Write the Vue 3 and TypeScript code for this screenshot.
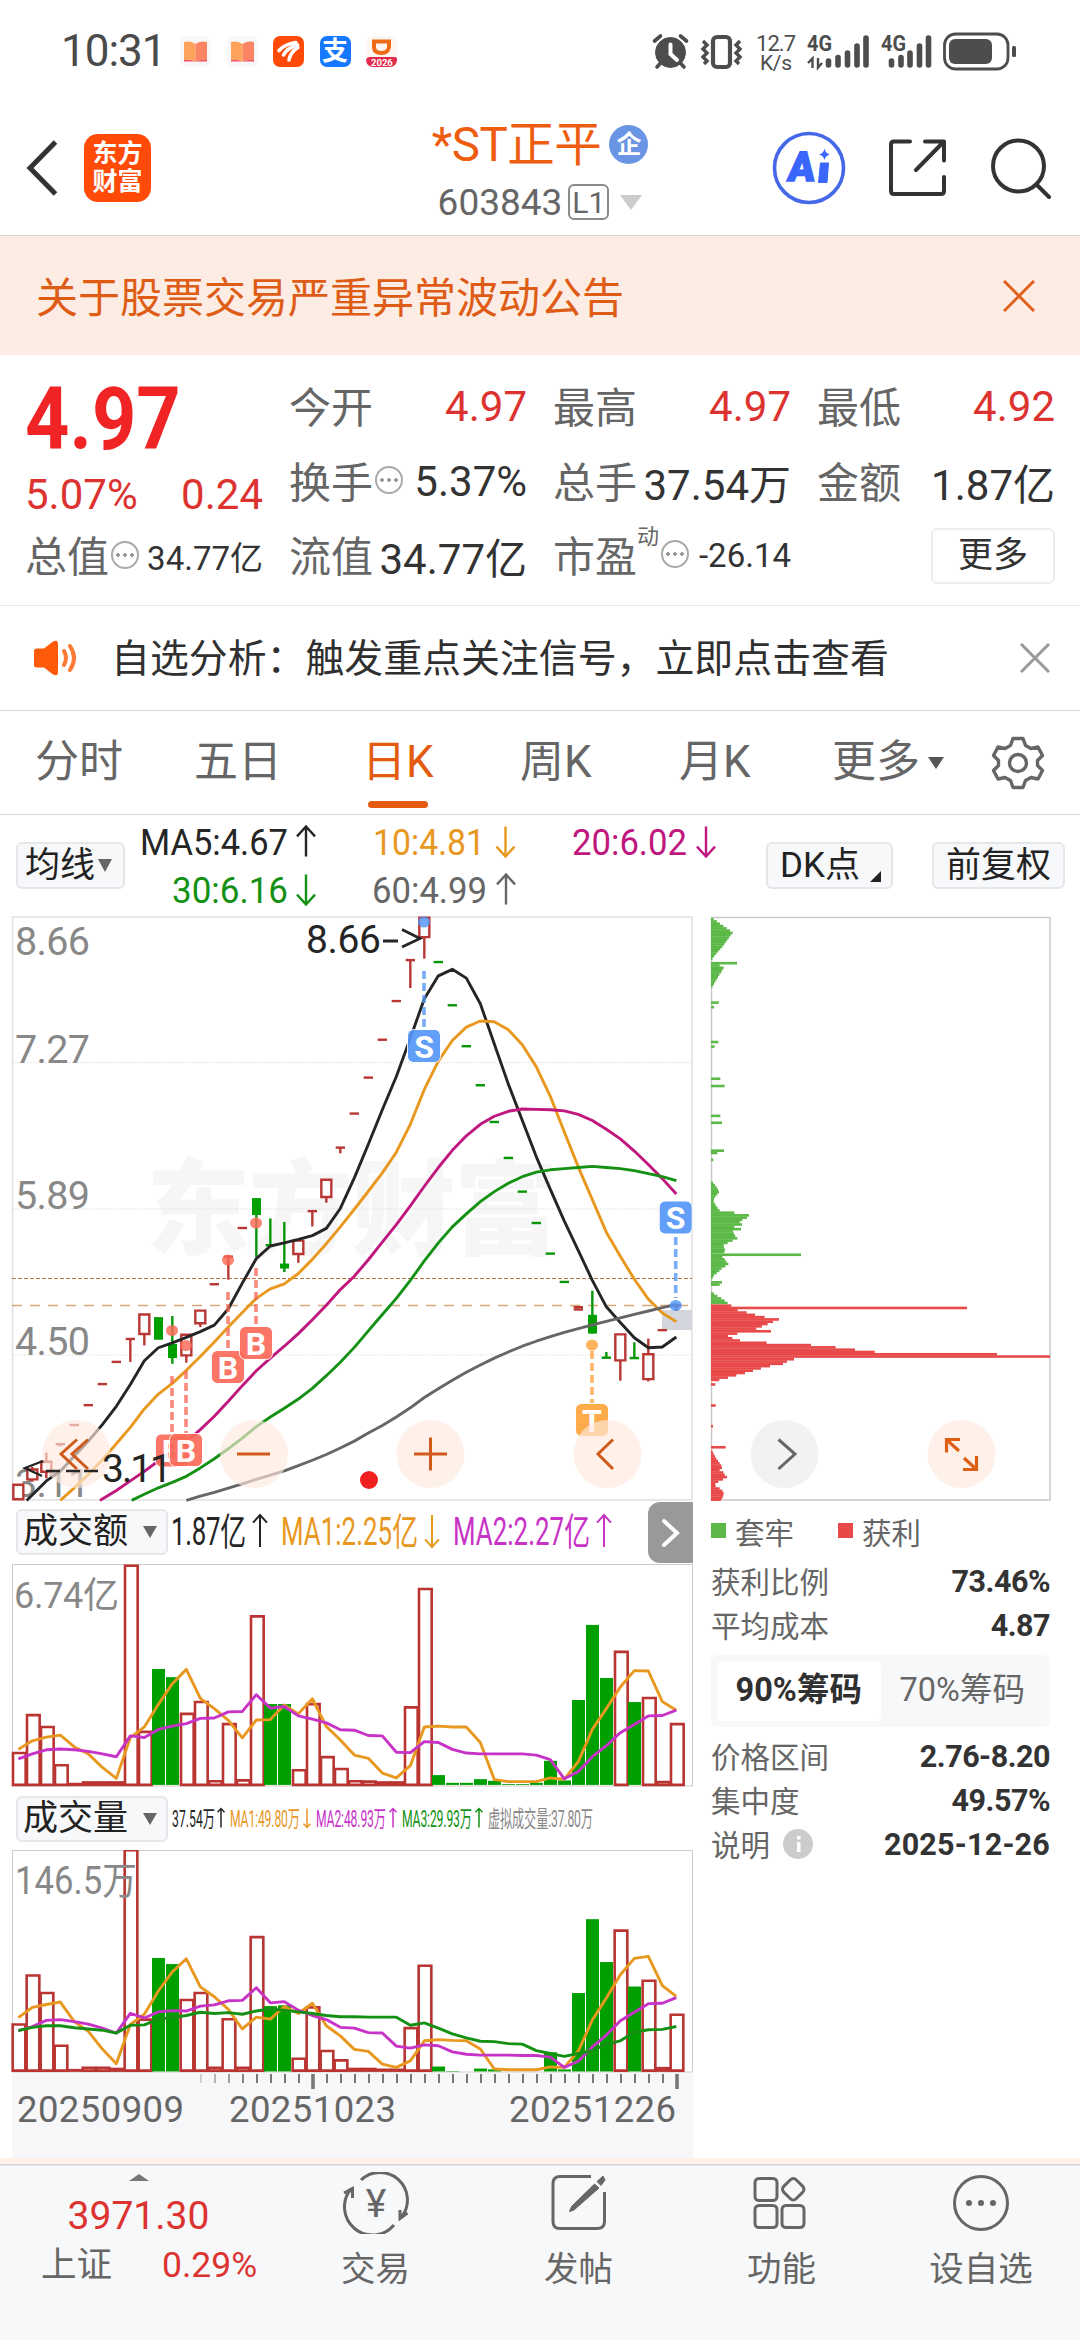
<script setup lang="ts">
type Kind = 'r' | 'g'

/* Plot units: one trading day is 42 wide, first day sits at 55. */
const dayX = (i: number): number => 55 + 42 * i
const line = (ys: number[], from = 0): string =>
  ys.map((y, i) => `${dayX(i + from)},${y}`).join(' ')

interface Candle {
  i: number
  k: Kind
  high?: number
  low?: number
  body?: [number, number]
  dash?: number
}

const candles: Candle[] = [
  { i: 0, k: 'r', body: [1502, 1540] },
  { i: 1, k: 'r', high: 1455, low: 1494, body: [1462, 1488] },
  { i: 2, k: 'r', high: 1418, low: 1485, body: [1442, 1468] },
  { i: 3, k: 'r', high: 1396, low: 1402, dash: 1396 },
  { i: 4, k: 'r', dash: 1346 },
  { i: 5, k: 'r', dash: 1294 },
  { i: 6, k: 'r', dash: 1239 },
  { i: 7, k: 'r', dash: 1181 },
  { i: 8, k: 'r', high: 1121, low: 1181, dash: 1121 },
  { i: 9, k: 'r', high: 1057, low: 1138, body: [1057, 1108] },
  { i: 10, k: 'g', body: [1064, 1123] },
  { i: 11, k: 'g', high: 1061, low: 1186, body: [1134, 1171] },
  { i: 12, k: 'r', high: 1110, low: 1183, body: [1110, 1164] },
  { i: 13, k: 'r', high: 1047, low: 1090, body: [1047, 1080] },
  { i: 14, k: 'r', dash: 978 },
  { i: 15, k: 'r', high: 906, low: 966, dash: 906 },
  { i: 16, k: 'r', dash: 831 },
  { i: 17, k: 'g', high: 753, low: 907, body: [753, 797] },
  { i: 18, k: 'g', high: 806, low: 876, dash: 876 },
  { i: 19, k: 'g', high: 815, low: 946, body: [924, 937] },
  { i: 20, k: 'r', high: 864, low: 922, body: [864, 899] },
  { i: 21, k: 'r', high: 787, low: 827, dash: 787 },
  { i: 22, k: 'r', high: 705, low: 765, body: [705, 750] },
  { i: 23, k: 'r', high: 621, low: 636, dash: 621 },
  { i: 24, k: 'r', dash: 532 },
  { i: 25, k: 'r', dash: 438 },
  { i: 26, k: 'r', dash: 339 },
  { i: 27, k: 'r', dash: 238 },
  { i: 28, k: 'r', high: 131, low: 204, dash: 131 },
  { i: 29, k: 'r', high: 20, low: 127, body: [20, 71] },
  { i: 30, k: 'g', dash: 136 },
  { i: 31, k: 'g', dash: 249 },
  { i: 32, k: 'g', dash: 356 },
  { i: 33, k: 'g', dash: 458 },
  { i: 34, k: 'g', dash: 554 },
  { i: 35, k: 'g', dash: 648 },
  { i: 36, k: 'g', dash: 736 },
  { i: 37, k: 'g', dash: 818 },
  { i: 38, k: 'g', dash: 898 },
  { i: 39, k: 'g', dash: 972 },
  { i: 40, k: 'r', dash: 1038 },
  { i: 40, k: 'r', dash: 1044 },
  { i: 41, k: 'g', high: 995, low: 1107, body: [1058, 1107] },
  { i: 42, k: 'g', high: 1155, low: 1170, dash: 1170 },
  { i: 43, k: 'r', high: 1109, low: 1230, body: [1109, 1177] },
  { i: 44, k: 'g', high: 1130, low: 1171, dash: 1171 },
  { i: 45, k: 'r', high: 1120, low: 1232, body: [1161, 1226] },
  { i: 46, k: 'r', dash: 1098 },
  { i: 47, k: 'r', high: 1033, low: 1047, dash: 1033 },
]

const priceLines = [
  {
    color: '#252525',
    points: '80,1543 ' + line([1492, 1467, 1427, 1388, 1345, 1297, 1240, 1178, 1144, 1131, 1117, 1102, 1085, 1042, 975, 911, 878, 870, 861, 851, 832, 780, 700, 612, 522, 435, 335, 232, 172, 155, 178, 245, 350, 455, 550, 645, 730, 813, 890, 968, 1037, 1078, 1118, 1144, 1142, 1116], 2),
  },
  {
    color: '#e8981f',
    points: line([1543, 1510, 1475, 1437, 1395, 1352, 1304, 1265, 1237, 1203, 1167, 1129, 1090, 1052, 1015, 990, 977, 950, 913, 872, 828, 782, 735, 687, 633, 560, 469, 395, 341, 306, 290, 292, 313, 352, 410, 487, 580, 672, 757, 842, 905, 965, 1017, 1053, 1076], 3),
  },
  {
    color: '#c0177f',
    points: '300,1543 ' + line([1539, 1517, 1492, 1467, 1440, 1415, 1389, 1358, 1323, 1284, 1243, 1204, 1171, 1140, 1107, 1071, 1033, 992, 957, 914, 868, 822, 773, 722, 673, 628, 590, 560, 539, 526, 520, 521, 522, 525, 534, 550, 573, 598, 630, 665, 702, 742], 6),
  },
  {
    color: '#149114',
    points: '395,1543 ' + line([1527, 1510, 1496, 1480, 1458, 1434, 1408, 1380, 1350, 1325, 1302, 1278, 1250, 1217, 1182, 1143, 1100, 1057, 1015, 968, 917, 870, 828, 794, 762, 736, 714, 697, 685, 679, 676, 673, 670, 673, 676, 681, 689, 697, 707], 9),
  },
  {
    color: '#666',
    points: line([1543, 1532, 1522, 1511, 1500, 1488, 1477, 1466, 1452, 1438, 1423, 1406, 1388, 1367, 1347, 1325, 1301, 1274, 1251, 1229, 1208, 1189, 1171, 1155, 1140, 1127, 1115, 1104, 1094, 1084, 1075, 1066, 1057, 1048, 1039, 1031], 12),
  },
]

interface Mark {
  x: number
  y: number
  t: string
  color: string
  dot: number
  from: number
  to: number
}
/* Trading marks in chart pixels. */
const marks: Mark[] = [
  { x: 172, y: 540.5, t: 'B', color: '#fb6b5a', dot: 420.5, from: 466, to: 523 },
  { x: 186, y: 540, t: 'B', color: '#fb6b5a', dot: 435.5, from: 461, to: 523 },
  { x: 228, y: 457, t: 'B', color: '#fb6b5a', dot: 350, from: 382, to: 440 },
  { x: 256, y: 433, t: 'B', color: '#fb6b5a', dot: 313, from: 358, to: 416 },
  { x: 424, y: 136, t: 'S', color: '#5597f8', dot: 12, from: 61, to: 118 },
  { x: 675.7, y: 307.5, t: 'S', color: '#5597f8', dot: 395.5, from: 327, to: 388 },
  { x: 592, y: 510, t: 'T', color: '#fda43c', dot: 435, from: 441, to: 493 },
]

const priceLabels = [
  { t: '8.66', y: 45 },
  { t: '7.27', y: 153 },
  { t: '5.89', y: 299 },
  { t: '4.50', y: 445 },
  { t: '3.11', y: 587 },
]

const gIdx = [10, 11, 18, 19, 30, 31, 32, 33, 34, 35, 36, 37, 38, 39, 40, 41, 42, 44]
interface Bar {
  x: number
  y: number
  green: boolean
}
const bars = (tops: number[]): Bar[] =>
  tops.map((y, i) => ({ x: dayX(i), y, green: gIdx.includes(i) }))

const amountBars = bars([618, 525, 554, 648, 694, 690, 690, 690, 159, 566, 414, 434, 522, 493, 687, 547, 685, 283, 500, 500, 660, 498, 628, 657, 687, 688, 690, 690, 506, 216, 674, 693, 693, 684, 688, 696, 696, 693, 639, 687, 490, 306, 436, 370, 495, 483, 689, 547])
const volumeBars = bars([1285, 1165, 1208, 1337, 1397, 1391, 1391, 1394, 858, 1273, 1122, 1137, 1225, 1208, 1391, 1272, 1391, 1071, 1240, 1238, 1369, 1243, 1350, 1373, 1394, 1394, 1396, 1396, 1294, 1141, 1388, 1399, 1400, 1393, 1395, 1400, 1400, 1400, 1353, 1395, 1208, 1027, 1132, 1055, 1192, 1178, 1392, 1261])

const amountLines = [
  { color: '#e8981f', points: line([611, 590, 581, 576, 605, 622, 655, 682, 582, 556, 501, 450, 415, 486, 511, 540, 583, 539, 538, 502, 524, 487, 555, 588, 625, 633, 669, 681, 651, 556, 554, 556, 556, 594, 685, 690, 690, 690, 681, 684, 641, 562, 511, 458, 418, 419, 494, 515]) },
  { color: '#c733c7', points: line([634, 622, 612, 610, 612, 616, 622, 629, 578, 582, 562, 554, 548, 535, 534, 519, 518, 477, 510, 506, 529, 537, 546, 563, 564, 577, 578, 618, 619, 592, 594, 611, 620, 622, 622, 622, 622, 625, 636, 683, 665, 629, 602, 570, 550, 529, 528, 515]) },
]
const volumeLines = [
  { color: '#e8981f', points: line([1268, 1243, 1236, 1230, 1278, 1302, 1345, 1381, 1285, 1260, 1203, 1156, 1124, 1193, 1217, 1248, 1296, 1267, 1272, 1241, 1258, 1233, 1288, 1313, 1346, 1351, 1382, 1390, 1374, 1325, 1322, 1324, 1325, 1345, 1394, 1396, 1396, 1396, 1389, 1390, 1350, 1274, 1220, 1163, 1123, 1118, 1190, 1216]) },
  { color: '#c733c7', points: line([1300, 1290, 1275, 1273, 1278, 1284, 1294, 1306, 1258, 1269, 1254, 1251, 1252, 1240, 1237, 1227, 1226, 1195, 1232, 1229, 1250, 1263, 1273, 1292, 1294, 1305, 1306, 1338, 1343, 1335, 1337, 1352, 1358, 1360, 1360, 1360, 1361, 1361, 1365, 1390, 1375, 1340, 1311, 1276, 1255, 1234, 1233, 1219]) },
  { color: '#149114', points: line([1300, 1292, 1288, 1288, 1293, 1296, 1299, 1306, 1287, 1286, 1272, 1268, 1263, 1255, 1258, 1256, 1260, 1252, 1247, 1250, 1254, 1258, 1263, 1266, 1266, 1267, 1267, 1267, 1287, 1281, 1294, 1308, 1318, 1326, 1327, 1332, 1333, 1349, 1356, 1363, 1356, 1349, 1333, 1325, 1304, 1298, 1297, 1290]) },
]

const ticks = Array.from({ length: 35 }, (_, n) => ({
  x: 201 + 14 * n,
  big: n === 8 || n === 34,
  o: Math.min(1, 0.3 + n * 0.2),
}))

/* Chip distribution, rows of [y, width] 6 units apart. */
const greenRows: [number, number][] = [
  [24, 8], [30, 18], [36, 27], [42, 37], [48, 47], [54, 57], [60, 65], [66, 59], [72, 54], [78, 49], [84, 44], [90, 39], [96, 34], [102, 28], [108, 22], [114, 16], [120, 10], [126, 5],
  [139, 78], [145, 26], [151, 38], [157, 34], [163, 30], [169, 25], [175, 21], [181, 17], [187, 13], [193, 9], [199, 5],
  [242, 23], [254, 9], [345, 22], [357, 11], [441, 28], [460, 41], [538, 28], [556, 33], [629, 39], [635, 19], [653, 7],
  [713, 6], [719, 12], [725, 17], [731, 21], [737, 24], [743, 19], [749, 13], [755, 9], [761, 8], [767, 11], [773, 15], [779, 20], [785, 26], [791, 70], [798, 114], [804, 108], [810, 94], [816, 86], [822, 93], [828, 70], [834, 90], [840, 66], [846, 69], [852, 73], [858, 79], [864, 65], [870, 50], [876, 38], [882, 39], [888, 42], [894, 40], [901, 270], [907, 34], [913, 41], [919, 46], [925, 52], [931, 43], [937, 32], [943, 25], [949, 17], [955, 9], [961, 5],
  [973, 33], [979, 26], [1003, 9], [1009, 19], [1015, 31], [1021, 41], [1027, 50],
]
const redRows: [number, number][] = [
  [1034, 61], [1040, 768], [1046, 80], [1052, 107], [1058, 132], [1064, 161], [1070, 204], [1076, 186], [1082, 170], [1088, 153], [1094, 136], [1101, 180], [1107, 79], [1113, 51], [1119, 64], [1125, 87], [1131, 167], [1137, 300], [1143, 374], [1149, 432], [1155, 491], [1161, 858], [1167, 1017], [1174, 249], [1180, 228], [1186, 216], [1192, 177], [1198, 150], [1204, 126], [1210, 102], [1216, 76], [1222, 51], [1228, 25],
  [1240, 13], [1295, 14], [1349, 6], [1404, 44],
  [1416, 5], [1422, 8], [1428, 12], [1434, 16], [1440, 21], [1446, 26], [1452, 31], [1458, 33], [1464, 26], [1470, 37], [1476, 41], [1482, 48], [1488, 36], [1494, 22], [1500, 13], [1506, 14], [1512, 26], [1518, 34], [1524, 38], [1530, 37], [1536, 34], [1541, 30],
]

interface Legend {
  t: string
  x: number
  w: number
  c: string
  up?: boolean
  ax?: number
}
const maTop: (Legend & { y: number })[] = [
  { t: 'MA5:4.67', x: 140, w: 148, c: '#252525', up: true, ax: 306, y: 37.5 },
  { t: '10:4.81', x: 373, w: 112, c: '#e8981f', up: false, ax: 505.5, y: 37.5 },
  { t: '20:6.02', x: 572, w: 115, c: '#c0177f', up: false, ax: 706, y: 37.5 },
  { t: '30:6.16', x: 172, w: 116, c: '#149114', up: false, ax: 306, y: 85.5 },
  { t: '60:4.99', x: 372, w: 115, c: '#666', up: true, ax: 506, y: 85.5 },
]
/* Condensing factors of the two indicator rows. */
const amountSqueeze = 0.68
const volumeSqueeze = 0.53
const amountLegend: Legend[] = [
  { t: '1.87亿', x: 171, w: 75, c: '#252525', up: true, ax: 260 },
  { t: 'MA1:2.25亿', x: 281, w: 137, c: '#e8981f', up: false, ax: 432 },
  { t: 'MA2:2.27亿', x: 453, w: 137, c: '#c733c7', up: true, ax: 604 },
]
const volumeLegend: Legend[] = [
  { t: '37.54万', x: 172, w: 43, c: '#252525', up: true, ax: 221 },
  { t: 'MA1:49.80万', x: 230, w: 70, c: '#e8981f', up: false, ax: 307 },
  { t: 'MA2:48.93万', x: 316, w: 70, c: '#c733c7', up: true, ax: 393 },
  { t: 'MA3:29.93万', x: 402, w: 70, c: '#149114', up: true, ax: 479 },
  { t: '虚拟成交量:37.80万', x: 488, w: 105, c: '#888' },
]
const arrow = (x: number, y: number, up: boolean, h: number, w: number): string =>
  up
    ? `M${x} ${y + h}V${y - h}M${x - w} ${y - h + w * 1.1}L${x} ${y - h}L${x + w} ${y - h + w * 1.1}`
    : `M${x} ${y - h}V${y + h}M${x - w} ${y + h - w * 1.1}L${x} ${y + h}L${x + w} ${y + h - w * 1.1}`
</script>

<template>
  <div class="app">
    <div class="status">
      <span class="clock">10:31</span>
      <span v-for="n in 2" :key="n" class="pill book"><svg width="31" height="31" viewBox="0 0 31 31"><path d="M4 6q6-1.500 11.500 2v17.500q-5-2.500-11.500-1.500z" fill="#fda35c" /><path d="M27 6q-6-1.500-11.500 2v17.500q5-2.500 11.500-1.500z" fill="#fb8562" /><path d="M4 24q6-1 11.500 1.500q5-2.500 11.500-1.500v1.500H4z" fill="#f4506a" /></svg></span>
      <span class="pill em"><svg width="31" height="31" viewBox="0 0 31 31"><g fill="none" stroke="#fff" stroke-width="3.600" stroke-linecap="round"><path d="M6 14.500Q11 8.500 23 6.500" /><path d="M10.500 19Q14 12 24.500 9" /><path d="M16 24Q17.500 16 25 11.500" /></g></svg></span>
      <span class="pill ali">支</span>
      <span class="pill didi"><svg width="32" height="31" viewBox="0 0 32 31"><path d="M8 5.500H23V11Q22 17 15.500 17Q8 17 8 11Z" fill="none" stroke="#ee6a16" stroke-width="4" /><rect x="0" y="21" width="32" height="10" rx="4" fill="#e32b4c" /><text x="5" y="29.500" font-size="9.500" font-weight="700" fill="#fff">2026</text></svg></span>
      <span class="grow"></span>
      <svg class="sysicons" width="378" height="50" viewBox="645 25 378 50">
        <g fill="#4d4d4d" stroke="#4d4d4d">
          <circle cx="669.500" cy="51.500" r="15" />
          <path d="M653.500 40l6-5M685.500 40l-6-5M656 66l4-4.500M683 66l-4-4.500" stroke-width="3.600" fill="none" stroke-linecap="round" />
          <path d="M669.500 43.500V53L676 59" stroke="#fff" stroke-width="4" fill="none" stroke-linecap="round" />
          <rect x="712" y="36" width="17" height="30" rx="4" fill="none" stroke-width="4.200" />
          <path d="M702 40l4 4-4 4 4 4-4 4 4 4-3 3M739 40l-4 4 4 4-4 4 4 4-4 4 3 3" stroke-width="3.400" fill="none" />
          <g stroke-width="5.600" stroke-linecap="round">
            <path d="M827.500 60v4M837 56.500V64M846.500 52V64M856 45V64M865 37V64" />
            <path d="M890.500 60v4M900 56.500V64M909 52V64M918.500 45V64M927.500 37V64" />
          </g>
          <path d="M811.500 67V57.500L807 62M817 57v9.500L821 62" stroke-width="2.400" fill="none" />
          <rect x="943.500" y="33" width="63.500" height="35" rx="11" fill="none" stroke-width="2.800" />
          <rect x="948" y="38" width="43" height="25" rx="6" stroke="none" />
          <rect x="1011" y="45" width="4" height="11" rx="1.500" stroke="none" />
        </g>
        <g fill="#4d4d4d">
          <text x="755" y="50" font-size="22" textLength="40">12.7</text>
          <text x="759" y="68.500" font-size="21" textLength="32">K/s</text>
          <text x="806" y="50" font-size="22" font-weight="700" textLength="25" lengthAdjust="spacingAndGlyphs">4G</text>
          <text x="880" y="50" font-size="22" font-weight="700" textLength="25" lengthAdjust="spacingAndGlyphs">4G</text>
        </g>
      </svg>
    </div>

    <header class="nav">
      <div class="nav-left">
        <svg width="36" height="60" viewBox="0 0 36 60"><path d="M31.500 4L6 30L31.500 56" fill="none" stroke="#333" stroke-width="5" /></svg>
        <div class="logo"><span>东方</span><span>财富</span></div>
      </div>
      <div class="nav-mid">
        <div class="title"><span>*ST正平</span><i class="corp">企</i></div>
        <div class="code"><span>603843</span><i class="lv">L1</i><b class="tri"></b></div>
      </div>
      <div class="nav-right">
        <svg width="74" height="74" viewBox="0 0 74 74"><circle cx="37" cy="37" r="34.500" fill="none" stroke="#4468e8" stroke-width="3.600" /><text x="15" y="50" font-size="41" font-weight="900" fill="#3a66fb" stroke="#3a66fb" stroke-width="1.500" textLength="27" lengthAdjust="spacingAndGlyphs" transform="skewX(-6) translate(5 0)">A</text><path d="M48.500 32h8l-1.500 19.500h-8.500z" fill="#3a66fb" stroke="#3a66fb" stroke-linejoin="round" /><path d="M52.500 17.500Q53.500 22.500 58 23.500Q53.500 24.500 52.500 29Q51.500 24.500 47 23.500Q51.500 22.500 52.500 17.500Z" fill="#3a66fb" /></svg>
        <svg width="60" height="60" viewBox="0 0 60 60"><g fill="none" stroke="#333" stroke-width="4" stroke-linecap="round" stroke-linejoin="round"><path d="M22 3.500H6Q3 3.500 3 6.500V53Q3 56 6 56H53Q56 56 56 53V39" /><path d="M37 3.500H56V22.500M55 4.500L28 32" /></g></svg>
        <svg width="62" height="62" viewBox="0 0 62 62"><g fill="none" stroke="#333" stroke-width="4" stroke-linecap="round"><circle cx="28.500" cy="29" r="25.500" /><path d="M47 48L59 60" /></g></svg>
      </div>
    </header>

    <div class="banner">
      <span>关于股票交易严重异常波动公告</span>
      <svg width="32" height="32" viewBox="0 0 32 32"><path d="M1 1L31 31M31 1L1 31" stroke="#e0601c" stroke-width="3" /></svg>
    </div>

    <section class="quote">
      <div class="q-main">
        <div class="big"><span>4.97</span></div>
        <div class="chg red"><span>5.07%</span><span>0.24</span></div>
        <div class="cap"><label>总值</label><i class="dots"></i><span class="sm">34.77亿</span></div>
      </div>
      <div class="q-col">
        <div><label>今开</label><span class="red">4.97</span></div>
        <div><label>换手</label><i class="dots"></i><span>5.37%</span></div>
        <div class="r3"><label>流值</label><span>34.77亿</span></div>
      </div>
      <div class="q-col">
        <div><label>最高</label><span class="red">4.97</span></div>
        <div><label>总手</label><span>37.54万</span></div>
        <div class="r3"><label>市盈</label><sup>动</sup><i class="dots"></i><span class="sm">-26.14</span></div>
      </div>
      <div class="q-col">
        <div><label>最低</label><span class="red">4.92</span></div>
        <div><label>金额</label><span>1.87亿</span></div>
        <div class="end"><button class="more">更多</button></div>
      </div>
    </section>

    <div class="notice">
      <svg width="46" height="38" viewBox="0 0 46 38"><path d="M1 12Q1 9.500 4 9.500H11L20 2.500Q25 0 25 5V33Q25 38 20 35.500L11 28.500H4Q1 28.500 1 26Z" fill="#ff5a0a" /><path d="M31 12Q35 19 31 26M37 7Q45 19 37 31" fill="none" stroke="#ff7a36" stroke-width="4" stroke-linecap="round" /></svg>
      <span>自选分析：触发重点关注信号，立即点击查看</span>
      <svg width="30" height="30" viewBox="0 0 30 30"><path d="M1 1L29 29M29 1L1 29" stroke="#999" stroke-width="3" /></svg>
    </div>

    <nav class="tabs">
      <span class="w1">分时</span><span class="w2">五日</span><span class="w3 on">日K</span><span class="w4">周K</span><span class="w5">月K</span>
      <span class="tmore">更多<b></b></span>
      <svg width="54" height="54" viewBox="-27 -27 54 54"><path d="M-5 -24.500H5L7.500 -17.500L13 -14.500L20 -16L24.500 -7.500L19.500 -2.500V2.500L24.500 7.500L20 16L13 14.500L7.500 17.500L5 24.500H-5L-7.500 17.500L-13 14.500L-20 16L-24.500 7.500L-19.500 2.500V-2.500L-24.500 -7.500L-20 -16L-13 -14.500L-7.500 -17.500Z" fill="none" stroke="#666" stroke-width="3.400" stroke-linejoin="round" /><circle r="8.500" fill="none" stroke="#666" stroke-width="3.400" /></svg>
    </nav>

    <div class="ma-row">
      <button class="chip ma">均线<b></b></button>
      <svg class="ma-legend" width="640" height="100" viewBox="125 -2 640 100">
        <g v-for="m in maTop" :key="m.t">
          <text :x="m.x" :y="m.y" :fill="m.c" font-size="36.500" :textLength="m.w" lengthAdjust="spacingAndGlyphs">{{ m.t }}</text>
          <path :d="arrow(m.ax ?? 0, m.y - 13, m.up ?? false, 15, 9)" :stroke="m.c" fill="none" stroke-width="2.400" />
        </g>
      </svg>
      <button class="chip dk">DK点<b></b></button>
      <button class="chip fq">前复权</button>
    </div>

    <div class="charts">
      <div class="left">
        <svg class="blk" width="700" height="592" viewBox="0 0 700 592">
          <g class="wm"><text x="146" y="337" font-size="104" font-weight="900" textLength="412">东方财富</text></g>
          <rect x="12.500" y="7" width="679.500" height="583" fill="none" stroke="#e2e2e2" stroke-width="1.600" />
          <path d="M12 152.700H692M12 299H692M12 445H692" stroke="#ddd" stroke-dasharray="1.500 1.500" fill="none" />
          <path d="M12 368.500H692" stroke="#c0703c" stroke-width="1.200" stroke-dasharray="4 2" />
          <path d="M12 395.500H692" stroke="#d9a877" stroke-width="1.400" stroke-dasharray="10 8" />
          <rect x="662" y="400" width="30" height="20" fill="#d3d6dc" />
          <text v-for="p in priceLabels" :key="p.t" x="15" :y="p.y" font-size="39.500" fill="#888" textLength="75">{{ p.t }}</text>
          <g transform="scale(0.33333 0.38265)" class="plot">
            <template v-for="(c, n) in candles" :key="n">
              <path v-if="c.high !== undefined" :d="`M${dayX(c.i)} ${c.high}V${c.low}`" :class="c.k" />
              <rect v-if="c.body" :x="dayX(c.i) - (c.k === 'r' ? 15 : 13)" :y="c.body[0]" :width="c.k === 'r' ? 30 : 27" :height="c.body[1] - c.body[0]" :class="[c.k, 'box']" />
              <path v-if="c.dash !== undefined" :d="`M${dayX(c.i) - 14} ${c.dash}h28`" :class="c.k" />
            </template>
            <polyline v-for="l in priceLines" :key="l.color" :points="l.points" :stroke="l.color" class="ln" />
          </g>
          <text x="306" y="43" font-size="39" fill="#252525" textLength="75">8.66</text>
          <path d="M383 31H398M402 19.500L420 28.500L402 37" class="ptr" />
          <g v-for="(m, n) in marks" :key="n" opacity="0.920">
            <path :d="`M${m.x} ${m.from}V${m.to}`" :stroke="m.color" stroke-width="3.600" stroke-dasharray="8 4" opacity="0.850" />
            <ellipse :cx="m.x" :cy="m.dot" rx="6" ry="5.500" :fill="m.color" opacity="0.900" />
            <rect :x="m.x - 16.5" :y="m.y - 16.5" width="33" height="33" rx="6" :fill="m.color" stroke="#fff" stroke-width="1" />
            <text :x="m.x" :y="m.y + 11.5" text-anchor="middle" font-size="32" font-weight="700" fill="#fff">{{ m.t }}</text>
          </g>
          <g fill="#ffe9df" fill-opacity="0.650">
            <circle cx="76.500" cy="544" r="34" /><circle cx="254" cy="544" r="34" /><circle cx="430.500" cy="544" r="34" /><circle cx="607.500" cy="544" r="34" />
          </g>
          <path d="M43 551L25 558L42 566M46 561H60M66 561H80M84 561H98" class="ptr thin" />
          <text x="102" y="572" font-size="39" fill="#252525" textLength="70">3.11</text>
          <g stroke="#cf5a1a" stroke-width="3" fill="none">
            <path d="M77 529.500L61 544L77 559M88 529.500L72 544L88 559M237 544h33M414 544h33M430.500 527.500v33M613 529.500L598 544L613 559" />
          </g>
          <circle cx="369" cy="570" r="9" fill="#f02020" />
        </svg>

        <div class="sub">
          <button class="chip vol">成交额<b></b></button>
          <svg width="470" height="62" viewBox="168 0 470 62">
            <g v-for="m in amountLegend" :key="m.t">
              <text :transform="`translate(${m.x} 43) scale(${amountSqueeze} 1)`" :fill="m.c" font-size="38" :textLength="m.w / amountSqueeze">{{ m.t }}</text>
              <path :d="arrow(m.ax ?? 0, 29, m.up ?? false, 16, 7)" :stroke="m.c" fill="none" stroke-width="2" />
            </g>
          </svg>
          <span class="nextbtn"><svg width="20" height="30" viewBox="0 0 20 30"><path d="M3 3L16 15L3 27" fill="none" stroke="#fff" stroke-width="4" stroke-linecap="round" /></svg></span>
        </div>

        <svg class="blk" width="700" height="223" viewBox="0 64 700 223">
          <rect x="12.500" y="64.500" width="680" height="221.500" fill="none" stroke="#ccc" />
          <g transform="scale(0.33333 0.40816)" class="plot">
            <template v-for="b in amountBars" :key="b.x">
              <rect v-if="b.green" :x="b.x - 19" :y="b.y" width="39" :height="698 - b.y" class="g fill" />
              <rect v-else :x="b.x - 16" :y="b.y + 2" width="38" :height="Math.max(1, 696 - b.y)" class="r box bar" />
            </template>
            <polyline v-for="l in amountLines" :key="l.color" :points="l.points" :stroke="l.color" class="ln" />
          </g>
          <text x="14" y="108" font-size="36" fill="#888" textLength="105">6.74亿</text>
        </svg>

        <div class="sub sub2">
          <button class="chip vol">成交量<b></b></button>
          <svg width="470" height="62" viewBox="168 0 470 62">
            <g v-for="m in volumeLegend" :key="m.t">
              <text :transform="`translate(${m.x} 40) scale(${volumeSqueeze} 1)`" :fill="m.c" font-size="23" :textLength="m.w / volumeSqueeze">{{ m.t }}</text>
              <path v-if="m.ax" :d="arrow(m.ax, 31, m.up ?? false, 9.5, 3.5)" :stroke="m.c" fill="none" stroke-width="1.500" />
            </g>
          </svg>
        </div>

        <svg class="blk" width="700" height="308" viewBox="0 350 700 308">
          <rect x="12" y="573" width="681" height="90" fill="#f7f7fa" />
          <rect x="12.500" y="350.500" width="680" height="221.500" fill="none" stroke="#ccc" />
          <g transform="scale(0.33333 0.40816)" class="plot">
            <template v-for="b in volumeBars" :key="b.x">
              <rect v-if="b.green" :x="b.x - 19" :y="b.y" width="39" :height="1400 - b.y" class="g fill" />
              <rect v-else :x="b.x - 17" :y="b.y" width="38" :height="Math.max(1, 1398 - b.y)" class="r box bar" />
            </template>
            <polyline v-for="l in volumeLines" :key="l.color" :points="l.points" :stroke="l.color" class="ln" />
          </g>
          <text x="15" y="393.500" font-size="38" fill="#888" textLength="122" lengthAdjust="spacingAndGlyphs">146.5万</text>
          <path v-for="t in ticks" :key="t.x" :d="`M${t.x} 574v${t.big ? 15 : 9}`" stroke="#777" :stroke-width="t.big ? 3.6 : 2" :opacity="t.o" />
          <g font-size="36.500" fill="#666">
            <text x="17" y="622" textLength="167">20250909</text>
            <text x="229" y="622" textLength="167">20251023</text>
            <text x="509" y="622" textLength="167">20251226</text>
          </g>
        </svg>
      </div>

      <aside class="right">
        <svg class="blk" width="380" height="592" viewBox="0 0 380 592">
          <rect x="11.500" y="7.500" width="338.500" height="582.500" fill="none" stroke="#c9c9c9" stroke-width="1.500" />
          <g transform="scale(0.33333 0.38265)">
            <rect v-for="r in greenRows" :key="r[0]" x="33" :y="r[0] - 3.4" :width="r[1]" height="6.800" fill="#5cb947" />
            <rect v-for="r in redRows" :key="r[0]" x="33" :y="r[0] - 3.4" :width="r[1]" height="6.800" fill="#e84a4a" />
          </g>
          <circle cx="84.500" cy="544" r="34" fill="#f2f2f2" />
          <path d="M78.500 529.500L95 544L78.500 559" fill="none" stroke="#666" stroke-width="3" />
          <circle cx="261.500" cy="544" r="34" fill="#fff1e9" />
          <g fill="none" stroke="#dd5f14" stroke-width="3.200"><path d="M260 529.500H246.500V542.500M247 530L259 541M263 559.500H276.500V546M276 559L264 548" /></g>
        </svg>
        <div class="key"><b class="sq gr"></b><span>套牢</span><b class="sq rd"></b><span>获利</span></div>
        <div class="info"><label>获利比例</label><strong>73.46%</strong></div>
        <div class="info"><label>平均成本</label><strong>4.87</strong></div>
        <div class="seg"><span class="sel">90%筹码</span><span>70%筹码</span></div>
        <div class="info"><label>价格区间</label><strong>2.76-8.20</strong></div>
        <div class="info"><label>集中度</label><strong>49.57%</strong></div>
        <div class="info"><label>说明</label><i class="inf"></i><strong class="date">2025-12-26</strong></div>
      </aside>
    </div>

    <footer class="bar-bottom">
      <div class="index">
        <b class="up"></b>
        <div class="idx red">3971.30</div>
        <div class="idx2"><span>上证</span><span class="red">0.29%</span></div>
      </div>
      <div class="act">
        <svg width="66" height="62" viewBox="-33 -31 66 62"><g fill="none" stroke="#666" stroke-width="3"><path d="M-15 -23A27.500 27.500 0 0 1 25.500 14M18 22A27.500 27.500 0 0 1 -25 -14" /><path d="M-32 -10L-23.500 -14.500V-5M31.500 10L24 15.500V7" /></g><text x="0" y="14" text-anchor="middle" font-size="39" fill="#666">¥</text></svg>
        <span>交易</span>
      </div>
      <div class="act">
        <svg width="62" height="62" viewBox="-31 -31 62 62"><path d="M12 -26.500H-19Q-26 -26.500 -26 -19.500V18.500Q-26 25.500 -19 25.500H18Q25.500 25.500 25.500 18.500V-11" fill="none" stroke="#666" stroke-width="3" /><path d="M15.500 -19L20 -15L-5 7L-9.500 8.500L-7.500 3.500ZM18 -21.500L24 -27L26 -23L22 -17.500Z" fill="#666" stroke="#666" /></svg>
        <span>发帖</span>
      </div>
      <div class="act">
        <svg width="62" height="62" viewBox="-31 -31 62 62"><g fill="none" stroke="#666" stroke-width="3"><rect x="-27" y="-24.500" width="22" height="22" rx="4" /><rect x="-27" y="2.500" width="22" height="22" rx="4" /><rect x="0" y="2.500" width="22" height="22" rx="4" /><rect x="2.500" y="-22.500" width="17.500" height="17.500" rx="4" transform="rotate(45 11.250 -13.750)" /></g></svg>
        <span>功能</span>
      </div>
      <div class="act last">
        <svg width="62" height="62" viewBox="-31 -31 62 62"><circle r="26.500" fill="none" stroke="#666" stroke-width="3" /><g fill="#666"><circle cx="-12" r="3" /><circle r="3" /><circle cx="12" r="3" /></g></svg>
        <span>设自选</span>
      </div>
    </footer>
  </div>
</template>

<style>
body {
  margin: 0;
  background: #fff;
}
</style>

<style scoped>
.app {
  width: 1080px;
  height: 2340px;
  overflow: hidden;
  display: flex;
  flex-direction: column;
  background: #fff;
  color: #333;
  font-family: Roboto, 'Noto Sans CJK SC', sans-serif;
}
.app > * {
  flex-shrink: 0;
}
i {
  font-style: normal;
}
button {
  font: inherit;
  color: inherit;
  padding: 0;
  margin: 0;
}
.blk {
  display: block;
}
.red {
  color: #dc3330 !important;
}
.grow {
  flex: 1;
}

/* status bar */
.status {
  height: 100px;
  display: flex;
  align-items: center;
  padding: 2px 56px 0 61px;
  box-sizing: border-box;
}
.clock {
  font-size: 44px;
  width: 119px;
  color: #4a4a4a;
  letter-spacing: -1px;
}
.pill {
  width: 31px;
  height: 31px;
  margin-right: 15.500px;
  border-radius: 7px;
  overflow: hidden;
  display: block;
  font-size: 26px;
  line-height: 31px;
}
.pill svg {
  display: block;
}
.book {
  background: #f8f6f6;
}
.em {
  background: #ff4a08;
}
.ali {
  background: #1678fe;
  color: #fff;
  text-align: center;
  font-weight: 700;
}
.didi {
  background: #fdf6f2;
}

/* navigation */
.nav {
  height: 136px;
  border-bottom: 1px solid #d5d5d5;
  box-sizing: border-box;
  display: grid;
  grid-template-columns: 1fr auto 1fr;
}
.nav-left {
  display: flex;
  align-items: center;
  padding-left: 24px;
  gap: 24px;
}
.logo {
  width: 67px;
  height: 68px;
  border-radius: 14px;
  background: #ff4a08;
  color: #fff;
  font-size: 25px;
  font-weight: 700;
  line-height: 28px;
  display: flex;
  flex-direction: column;
  align-items: center;
  justify-content: center;
}
.nav-mid {
  display: flex;
  flex-direction: column;
  align-items: center;
  padding-top: 16px;
}
.title {
  display: flex;
  align-items: center;
  height: 56px;
  font-size: 47.500px;
  color: #ee5c10;
  gap: 8px;
  letter-spacing: -0.500px;
}
.title span {
  padding-bottom: 7px;
}
.corp {
  width: 39px;
  height: 39px;
  border-radius: 50%;
  background: #6a94e4;
  color: #fff;
  font-size: 25px;
  font-weight: 700;
  line-height: 39px;
  text-align: center;
}
.code {
  display: flex;
  align-items: center;
  height: 60px;
  font-size: 37px;
  color: #666;
}
.code .lv {
  border: 2px solid #8a8a8a;
  border-radius: 6px;
  width: 37px;
  height: 32px;
  line-height: 33px;
  font-size: 30px;
  text-align: center;
  margin-left: 6px;
}
.tri {
  border: 11px solid transparent;
  border-top: 15px solid #ccc;
  border-bottom: 0;
  margin-left: 11px;
}
.nav-right {
  display: flex;
  align-items: center;
  justify-content: flex-end;
  padding-right: 28px;
  gap: 42px;
}

.banner {
  height: 119px;
  background: #fcece3;
  display: flex;
  align-items: center;
  justify-content: space-between;
  padding: 0 45px 0 36px;
  color: #df5c16;
  font-size: 42px;
}
.banner span {
  padding-bottom: 3px;
}

/* quote */
.quote {
  height: 251px;
  box-sizing: border-box;
  border-bottom: 1px solid #e6e6e6;
  padding: 14px 25px 0 25px;
  display: grid;
  grid-template-columns: repeat(4, 238px);
  column-gap: 26px;
  font-size: 42px;
  color: #333;
}
.quote label {
  color: #666;
  padding-bottom: 5px;
}
.q-main {
  display: flex;
  flex-direction: column;
}
.big {
  height: 100px;
  line-height: 100px;
  font-size: 88px;
  font-weight: 700;
  color: #f02424;
}
.big span {
  display: block;
  transform: scaleX(0.880);
  transform-origin: 0 50%;
}
.chg {
  height: 51px;
  display: flex;
  align-items: center;
  justify-content: space-between;
}
.cap {
  height: 72px;
  display: flex;
  align-items: center;
}
.q-col > div {
  height: 75px;
  display: flex;
  align-items: center;
}
.q-col .r3 {
  height: 73px;
}
.q-col span,
.cap span {
  margin-left: auto;
}
.q-col .end {
  justify-content: flex-end;
}
.sm {
  font-size: 33px;
}
.dots {
  width: 28px;
  height: 28px;
  box-sizing: border-box;
  border: 2px solid #aaa;
  border-radius: 50%;
  margin: 0 0 3px 2px;
  background:
    radial-gradient(circle 2px at 5px 12px, #999 90%, transparent),
    radial-gradient(circle 2px at 12px 12px, #999 90%, transparent),
    radial-gradient(circle 2px at 19px 12px, #999 90%, transparent);
}
.quote sup {
  font-size: 22px;
  color: #666;
  line-height: 24px;
  align-self: flex-start;
  margin-top: 6px;
}
.more {
  width: 124px;
  height: 56px;
  background: #fff;
  border: 2px solid #ebedef;
  border-radius: 6px;
  font-size: 35px;
  line-height: 49px;
  margin-bottom: 2px;
}

.notice {
  height: 105px;
  box-sizing: border-box;
  border-bottom: 1px solid #d8d8d8;
  display: flex;
  align-items: center;
  padding: 0 30px 0 33px;
  font-size: 38.900px;
  color: #303030;
}
.notice span {
  flex: 1;
  margin-left: 32px;
  padding-bottom: 6px;
  white-space: nowrap;
}

/* tabs */
.tabs {
  height: 104px;
  box-sizing: border-box;
  border-bottom: 1px solid #d5d5d5;
  display: flex;
  align-items: center;
  padding: 0 35px 0 35px;
  font-size: 44px;
  color: #666;
}
.tabs span {
  line-height: 105px;
  position: relative;
}
.w1 {
  width: 159px;
}
.w2 {
  width: 168px;
}
.w3 {
  width: 158px;
}
.w4 {
  width: 159px;
}
.w5 {
  width: 153px;
}
.tabs svg {
  margin-left: auto;
}
.tabs .on {
  color: #e35a10;
}
.tabs .on::after {
  content: '';
  position: absolute;
  left: 6px;
  bottom: 7px;
  width: 60px;
  height: 7px;
  border-radius: 4px;
  background: #e35a10;
}
.tmore {
  display: flex;
  align-items: center;
}
.tmore b {
  border: 8px solid transparent;
  border-top: 12px solid #555;
  border-bottom: 0;
  margin-left: 8px;
}

/* moving averages */
.ma-row {
  height: 95px;
  display: flex;
  align-items: flex-start;
  padding-left: 16px;
}
.ma-legend {
  flex: none;
}
.chip {
  box-sizing: border-box;
  flex: none;
  height: 47px;
  border: 2px solid #e4e6ea;
  border-radius: 6px;
  background: #f7f8fa;
  color: #222;
  font-size: 35px;
  display: flex;
  align-items: center;
  line-height: 42px;
  white-space: nowrap;
}
.ma-row .chip {
  margin-top: 27px;
}
.ma {
  width: 109px;
  padding-left: 7px;
}
.ma b {
  border: 7.500px solid transparent;
  border-top: 13px solid #666;
  border-bottom: 0;
  margin-left: 3px;
}
.dk {
  width: 127px;
  padding-left: 12px;
  margin-left: 1px;
}
.dk b {
  border-left: 11px solid transparent;
  border-bottom: 11px solid #222;
  align-self: flex-end;
  margin: 0 0 5px 10px;
}
.fq {
  width: 133px;
  margin-left: 39px;
  padding-left: 12px;
}

/* charts */
.charts {
  height: 1248px;
  display: flex;
}
.left {
  width: 700px;
}
.right {
  width: 380px;
}
.plot path,
.plot rect,
.plot polyline {
  vector-effect: non-scaling-stroke;
}
.plot .r {
  stroke: #b83633;
  stroke-width: 2.400px;
  fill: none;
}
.plot .g {
  stroke: #079607;
  stroke-width: 2.400px;
}
.plot .g.box,
.plot .g.fill {
  fill: #009f00;
  stroke: none;
}
.plot .box.r {
  fill: #fff;
}
.plot .r.bar {
  stroke: #ba3532;
  stroke-width: 2.600px;
}
.ln {
  fill: none;
  stroke-width: 2.900px;
  stroke-linejoin: round;
}
.wm text {
  fill: #f6f6f6;
}
.ptr {
  fill: none;
  stroke: #252525;
  stroke-width: 2.800px;
}
.ptr.thin {
  stroke-width: 2.400px;
}
.sub {
  height: 62px;
  display: flex;
  align-items: flex-start;
  padding-left: 16px;
}
.sub2 {
  height: 63px;
}
.vol {
  width: 152px;
  height: 46px;
  margin-top: 7px;
  padding-left: 5px;
}
.sub2 .vol {
  margin-top: 9px;
}
.vol b {
  border: 7.500px solid transparent;
  border-top: 12px solid #666;
  border-bottom: 0;
  margin-left: 15px;
}
.nextbtn {
  width: 45px;
  height: 61px;
  margin-left: 10px;
  background: #999;
  border-radius: 12px 0 0 12px;
  display: flex;
  align-items: center;
  justify-content: center;
}

/* chip summary */
.key {
  height: 57px;
  display: flex;
  align-items: center;
  padding-left: 11px;
  font-size: 29.500px;
  color: #666;
}
.sq {
  width: 15px;
  height: 15px;
  margin-right: 9px;
}
.gr {
  background: #5cb947;
}
.rd {
  background: #e84a4a;
  margin-left: 44px;
}
.info {
  height: 44px;
  display: flex;
  align-items: center;
  padding: 0 30px 0 11px;
  font-size: 29.500px;
  color: #666;
}
.info label {
  padding-bottom: 3px;
}
.info strong {
  margin-left: auto;
  color: #333;
  font-size: 30.500px;
  font-weight: 700;
  letter-spacing: -0.500px;
}
.info .date {
  letter-spacing: 0.200px;
}
.inf {
  width: 30px;
  height: 30px;
  border-radius: 50%;
  margin-left: 13px;
  background:
    linear-gradient(#fff, #fff) 13.500px 13px / 3.500px 10px no-repeat,
    linear-gradient(#fff, #fff) 13.500px 7px / 3.500px 3.500px no-repeat,
    #ccc;
}
.seg {
  margin: 8px 30px 7px 11px;
  height: 72px;
  box-sizing: border-box;
  border-radius: 6px;
  background: #f7f8fa;
  padding: 6px;
  display: flex;
  font-size: 32.500px;
  color: #666;
  text-align: center;
  line-height: 59px;
}
.seg span {
  flex: 1;
}
.seg .sel {
  background: #fff;
  border-radius: 6px;
  color: #303030;
  font-weight: 700;
}

/* bottom bar */
.bar-bottom {
  height: 182px;
  box-sizing: border-box;
  border-top: 6px solid #fff0e8;
  background: #f7f8fa;
  box-shadow: inset 0 1.500px 0 #d3d3d6;
  display: flex;
  color: #666;
  font-size: 34.500px;
}
.index {
  width: 277px;
  display: flex;
  flex-direction: column;
  align-items: center;
}
.up {
  border: 10.500px solid transparent;
  border-bottom: 7px solid #777;
  border-top: 0;
  margin-top: 10px;
}
.idx {
  font-size: 39px;
  line-height: 46px;
  margin-top: 12px;
}
.idx2 {
  display: flex;
  gap: 50px;
  align-self: flex-start;
  margin-left: 41px;
  line-height: 52px;
  font-size: 35.500px;
}
.act {
  width: 203px;
  margin-left: -3px;
  display: flex;
  flex-direction: column;
  align-items: center;
  padding-top: 8px;
}
.act + .act {
  margin-left: 0;
}
.act.last {
  width: 196px;
}
.act svg {
  display: block;
}
.act span {
  line-height: 48px;
  margin-top: 11px;
}
</style>
